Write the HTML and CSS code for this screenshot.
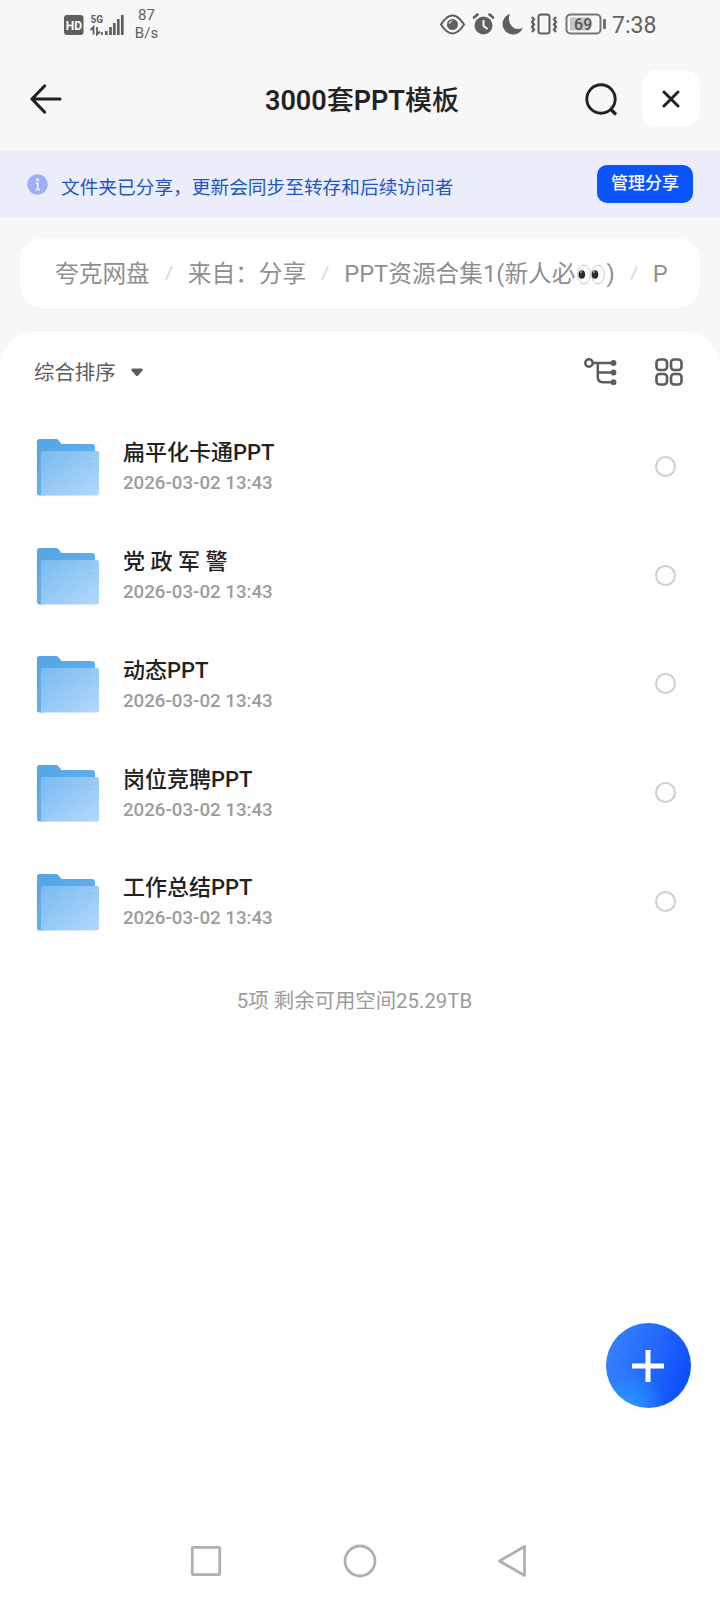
FILE: index.html
```
<!DOCTYPE html>
<html lang="zh-CN">
<head>
    <meta charset="UTF-8">
    <title>3000套PPT模板</title>
    <link rel="stylesheet" href="styles.css">
</head>
<body>
    <svg class="defs" width="0" height="0">
        <defs>
            <linearGradient id="back" x1="0" y1="0" x2="1" y2="0.6">
                <stop offset="0" stop-color="#55a5e5"/>
                <stop offset="1" stop-color="#5fb0ee"/>
            </linearGradient>
            <linearGradient id="front" x1="0" y1="0" x2="1" y2="1">
                <stop offset="0" stop-color="#78bbf1"/>
                <stop offset="1" stop-color="#b4d8fb"/>
            </linearGradient>
        </defs>
        <symbol id="folder" viewBox="0 0 62 57">
            <path d="M0 2.500Q0 0 2.500 0H19Q20.500 0 21.500 1.200L24.500 5H55Q58 5 58 8V54H2.500Q0 54 0 52Z" fill="url(#back)"/>
            <path d="M0 40V54Q0 56.500 2.500 56.500H8V12H4Z" fill="#62aeeb"/>
            <path d="M4 14Q4 12 6 12H60Q62 12 62 14V54Q62 56.500 59.500 56.500H4Z" fill="url(#front)"/>
            <path d="M50 19.500h6M50 25h6" stroke="#8dbfec" stroke-width="1.200"/>
        </symbol>
    </svg>

    <div class="status">
        <svg class="signal" width="60" height="26" viewBox="0 -4 60 26">
            <rect x="0" y="1" width="19.500" height="20" rx="3" fill="#5f5f5f"/>
            <text x="9.800" y="15.500" class="hd">HD</text>
            <text x="26.500" y="9" class="net">5G</text>
            <path d="M29.500 20.500v-7.500l-3 3M33 13v7.500l3-3M37.800 18v3" fill="none" stroke="#5f5f5f" stroke-width="1.800"/>
            <path d="M42.300 21v-4M46.500 21v-8M50.300 21v-12M54.300 21v-16M58.300 21V1" stroke="#5f5f5f" stroke-width="2.700"/>
        </svg>
        <div class="speed">87<br>B/s</div>
        <svg class="sys" width="168" height="22" viewBox="0 0 168 22">
            <g fill="none" stroke="#5f5f5f" stroke-width="2">
                <path d="M1 11.500Q12.500-6.500 24 11.500Q12.500 29.500 1 11.500Z"/>
            </g>
            <circle cx="12.500" cy="11.500" r="5.500" fill="#5f5f5f"/>
            <path d="M9.500 11a3 3 0 0 1 3-3" stroke="#ddd" fill="none" stroke-width="1.200"/>
            <circle cx="43.500" cy="12.500" r="9" fill="#5f5f5f"/>
            <path d="M34 4.500l3.500-3M53 4.500l-3.500-3" stroke="#5f5f5f" stroke-width="2.600" stroke-linecap="round"/>
            <path d="M43.500 7v6l4 3" stroke="#f7f7f7" stroke-width="2" fill="none"/>
            <path d="M70 1A10.500 10.500 0 1 0 83 14.500Q77 18 72 13.500Q67 8 70 1Z" fill="#5f5f5f"/>
            <rect x="98.500" y="1.500" width="11" height="19" rx="2.500" fill="none" stroke="#5f5f5f" stroke-width="2"/>
            <path d="M92 4l2 2.500-2 2.500 2 2.500-2 2.500 2 2.500-2 2.500M116 4l-2 2.500 2 2.500-2 2.500 2 2.500-2 2.500 2 2.500" fill="none" stroke="#5f5f5f" stroke-width="2.200"/>
            <rect x="126.500" y="1.500" width="34" height="19" rx="4" fill="none" stroke="#777" stroke-width="2"/>
            <rect x="130" y="4.500" width="20" height="13" fill="#c4c4c4"/>
            <path d="M164.500 6v10" stroke="#5f5f5f" stroke-width="2.500"/>
            <text x="143.200" y="17" class="power">69</text>
        </svg>
        <div class="time">7:38</div>
    </div>

    <div class="header">
        <svg class="back" width="32" height="30" viewBox="0 0 32 30">
            <path d="M14.500 2L2 15L14.500 28M2 15H30" fill="none" stroke="#222" stroke-width="3.200" stroke-linecap="round" stroke-linejoin="round"/>
        </svg>
        <div class="title"><b>3000</b>套<b>PPT</b>模板</div>
        <svg class="search" width="34" height="34" viewBox="0 0 34 34">
            <circle cx="17" cy="17" r="14.200" fill="none" stroke="#222" stroke-width="2.900"/>
            <path d="M26.500 27l5.500 5.500" stroke="#222" stroke-width="3.200"/>
        </svg>
        <div class="close">
            <svg width="18" height="18" viewBox="0 0 18 18">
                <path d="M2 2l14 14M16 2L2 16" stroke="#222" stroke-width="3" stroke-linecap="round"/>
            </svg>
        </div>
    </div>

    <div class="notice">
        <svg width="21" height="21" viewBox="0 0 21 21">
            <circle cx="10.500" cy="10.500" r="10.300" fill="#9cb0f3"/>
            <circle cx="10.500" cy="5.700" r="1.500" fill="#f2f4ff"/>
            <path d="M8.800 9.300h2v6.200M8.300 15.500h4.700" stroke="#f2f4ff" stroke-width="1.500" fill="none"/>
        </svg>
        <div class="notice-text">文件夹已分享，更新会同步至转存和后续访问者</div>
        <div class="manage">管理分享</div>
    </div>

    <div class="crumbs">
        <span>夸克网盘</span><svg class="slash" width="8" height="16" viewBox="0 0 8 16"><path d="M7 1L1 15"/></svg>
        <span>来自：分享</span><svg class="slash" width="8" height="16" viewBox="0 0 8 16"><path d="M7 1L1 15"/></svg>
        <span>PPT资源合集1(新人必<svg class="eyes" width="31" height="21" viewBox="0 0 31 21">
            <g fill="#fafafa" stroke="#c9cfcc">
                <ellipse cx="9" cy="10.500" rx="6.500" ry="9.500"/>
                <ellipse cx="23" cy="10.500" rx="6.500" ry="9.500"/>
            </g>
            <ellipse cx="6.800" cy="10.500" rx="3.300" ry="4.300" fill="#2d2d2d"/>
            <ellipse cx="20" cy="10.500" rx="3.300" ry="4.300" fill="#2d2d2d"/>
            <circle cx="6" cy="8" r="0.800" fill="#fff"/>
            <circle cx="19" cy="8" r="0.800" fill="#fff"/>
        </svg>)</span><svg class="slash" width="8" height="16" viewBox="0 0 8 16"><path d="M7 1L1 15"/></svg>
        <span>P</span>
    </div>

    <div class="sheet">
        <div class="tools">
            <div class="sort">综合排序</div>
            <svg class="caret" width="12" height="9" viewBox="0 0 12 9">
                <path d="M1.500 0.500H10.500Q12.500 1 11.300 2.800L7.200 7.500Q6 8.800 4.800 7.500L0.700 2.800Q-0.500 1 1.500 0.500Z" fill="#5c5c5c"/>
            </svg>
            <svg class="tree" width="33" height="28" viewBox="0 0 33 28">
                <g fill="none" stroke="#5c5c5c" stroke-width="2.500">
                    <circle cx="5" cy="5" r="3.700"/>
                    <path d="M9 5H29M13.800 5V19Q13.800 24.200 19 24.200H29M13.800 14.500H29"/>
                </g>
                <g fill="#5c5c5c">
                    <circle cx="29.500" cy="5" r="2.900"/>
                    <circle cx="29.500" cy="14.500" r="2.900"/>
                    <circle cx="29.500" cy="24.200" r="2.900"/>
                </g>
            </svg>
            <svg class="grid" width="28" height="28" viewBox="0 0 28 28">
                <g fill="none" stroke="#5c5c5c" stroke-width="2.600">
                    <rect x="1.500" y="1.500" width="10.500" height="10.500" rx="3.200"/>
                    <rect x="16" y="1.500" width="10.500" height="10.500" rx="3.200"/>
                    <rect x="1.500" y="16" width="10.500" height="10.500" rx="3.200"/>
                    <rect x="16" y="16" width="10.500" height="10.500" rx="3.200"/>
                </g>
            </svg>
        </div>

        <ul class="list">
            <li>
                <svg class="folder" width="62" height="57"><use href="#folder"/></svg>
                <div class="info">
                    <div class="name">扁平化卡通PPT</div>
                    <div class="date">2026-03-02 13:43</div>
                </div>
                <i class="radio"></i>
            </li>
            <li>
                <svg class="folder" width="62" height="57"><use href="#folder"/></svg>
                <div class="info">
                    <div class="name">党 政 军 警</div>
                    <div class="date">2026-03-02 13:43</div>
                </div>
                <i class="radio"></i>
            </li>
            <li>
                <svg class="folder" width="62" height="57"><use href="#folder"/></svg>
                <div class="info">
                    <div class="name">动态PPT</div>
                    <div class="date">2026-03-02 13:43</div>
                </div>
                <i class="radio"></i>
            </li>
            <li>
                <svg class="folder" width="62" height="57"><use href="#folder"/></svg>
                <div class="info">
                    <div class="name">岗位竞聘PPT</div>
                    <div class="date">2026-03-02 13:43</div>
                </div>
                <i class="radio"></i>
            </li>
            <li>
                <svg class="folder" width="62" height="57"><use href="#folder"/></svg>
                <div class="info">
                    <div class="name">工作总结PPT</div>
                    <div class="date">2026-03-02 13:43</div>
                </div>
                <i class="radio"></i>
            </li>
        </ul>
        <div class="total">5项 剩余可用空间25.29TB</div>

        <div class="nav">
            <svg width="34" height="34" viewBox="0 0 34 34"><rect x="3.300" y="3.300" width="27.400" height="27.400" rx="1"/></svg>
            <svg width="34" height="34" viewBox="0 0 34 34"><circle cx="17" cy="17" r="15"/></svg>
            <svg width="34" height="34" viewBox="0 0 34 34"><path d="M27.500 2.500V31.500L2.500 17Z"/></svg>
        </div>
    </div>

    <div class="add">
        <svg width="32" height="32" viewBox="0 0 32 32">
            <path d="M16 0V32M0 16H32" stroke="#fff" stroke-width="5"/>
        </svg>
    </div>
</body>
</html>
```
FILE: styles.css
```
*{margin: 0;padding: 0;box-sizing: border-box;}
body{width: 720px;height: 1600px;position: relative;display: flex;flex-direction: column;background: #f7f7f7;font-family: Roboto,"Noto Sans CJK SC",sans-serif;color: #222;overflow: hidden;}
svg{display: block;flex: none;}
.defs{position: absolute;}

.status{height: 50px;display: flex;align-items: flex-start;padding-left: 64px;color: #5f5f5f;}
.signal{margin-top: 10px;}
.hd{font: 700 12px Roboto,sans-serif;fill: #fff;text-anchor: middle;}
.net{font: 700 10px Roboto,sans-serif;fill: #5f5f5f;}
.speed{width: 45px;margin-top: 6px;font-size: 15px;line-height: 18px;text-align: center;}
.sys{margin-left: 271px;margin-top: 13px;}
.power{font: 500 16px Roboto,sans-serif;fill: #555;text-anchor: middle;}
.time{margin-left: 4px;font-size: 23px;line-height: 51px;}

.header{height: 101px;display: flex;align-items: flex-start;padding-left: 30px;}
.back{margin-top: 34px;}
.title{width: 400px;margin-left: 100px;margin-top: 31px;font-size: 27px;line-height: 40px;font-weight: 500;text-align: center;}
.title b{font-weight: 600;}
.search{margin-left: 22px;margin-top: 32px;}
.close{width: 58px;height: 57px;margin-left: 24px;margin-top: 20px;border-radius: 15px;background: #fff;display: flex;align-items: center;justify-content: center;}

.notice{height: 66px;display: flex;align-items: center;padding: 0 27px;background: #ebedfa;}
.notice-text{margin-left: 13px;padding-top: 7px;font-size: 18.700px;line-height: 28px;color: #2457bd;white-space: nowrap;}
.notice .manage{width: 96px;height: 38px;margin-left: auto;border-radius: 10px;background: #0b53fb;color: #fff;font-size: 17px;line-height: 37px;font-weight: 500;text-align: center;}

.crumbs{height: 70px;margin: 21px 20px 0;padding: 2px 0 0 35px;border-radius: 22px;background: #fff;display: flex;align-items: center;font-size: 23.700px;line-height: 36px;color: #8f8f8f;white-space: nowrap;}
.slash{margin: -2px 15px 0;fill: none;stroke: #dedede;stroke-width: 2;}
.eyes{display: inline-block;vertical-align: -3px;}

.sheet{flex: 1;margin-top: 24px;border-radius: 34px 34px 0 0;background: #fefefe;display: flex;flex-direction: column;}
.tools{height: 80px;padding: 0 37px 0 34px;display: flex;align-items: center;color: #5c5c5c;}
.sort{margin-top: -2px;font-size: 20.400px;}
.caret{margin-left: 15px;}
.tree{margin-left: auto;}
.grid{margin-left: 38px;}
.list{list-style: none;}
.list li{height: 108.750px;padding: 0 44px 0 37px;display: flex;align-items: center;}
.folder{margin-top: 2px;}
.info{margin-left: 24px;padding-top: 2px;}
.name{font-size: 22px;line-height: 32px;font-weight: 500;}
.date{font-size: 18.700px;line-height: 28px;font-weight: 500;color: #9c9c9c;}
.radio{width: 21px;height: 21px;margin-left: auto;border: 2px solid #cfcfcf;border-radius: 50%;}
.total{margin-top: 30px;padding-right: 11px;font-size: 20.400px;line-height: 30px;text-align: center;color: #9b9b9b;}

.nav{margin: auto 0 22px;display: flex;justify-content: center;gap: 120px;}
.nav svg{fill: none;stroke: #b0b0b0;stroke-width: 2.800;stroke-linejoin: round;}

.add{width: 85px;height: 85px;position: absolute;left: 605.500px;top: 1323px;border-radius: 50%;background: radial-gradient(circle at 25% 100%,#2a9cfd 0,rgba(42,130,253,0) 38%),linear-gradient(110deg,#3a86fb 0,#2468fc 50%,#0f50fb 85%);display: flex;align-items: center;justify-content: center;}
```
